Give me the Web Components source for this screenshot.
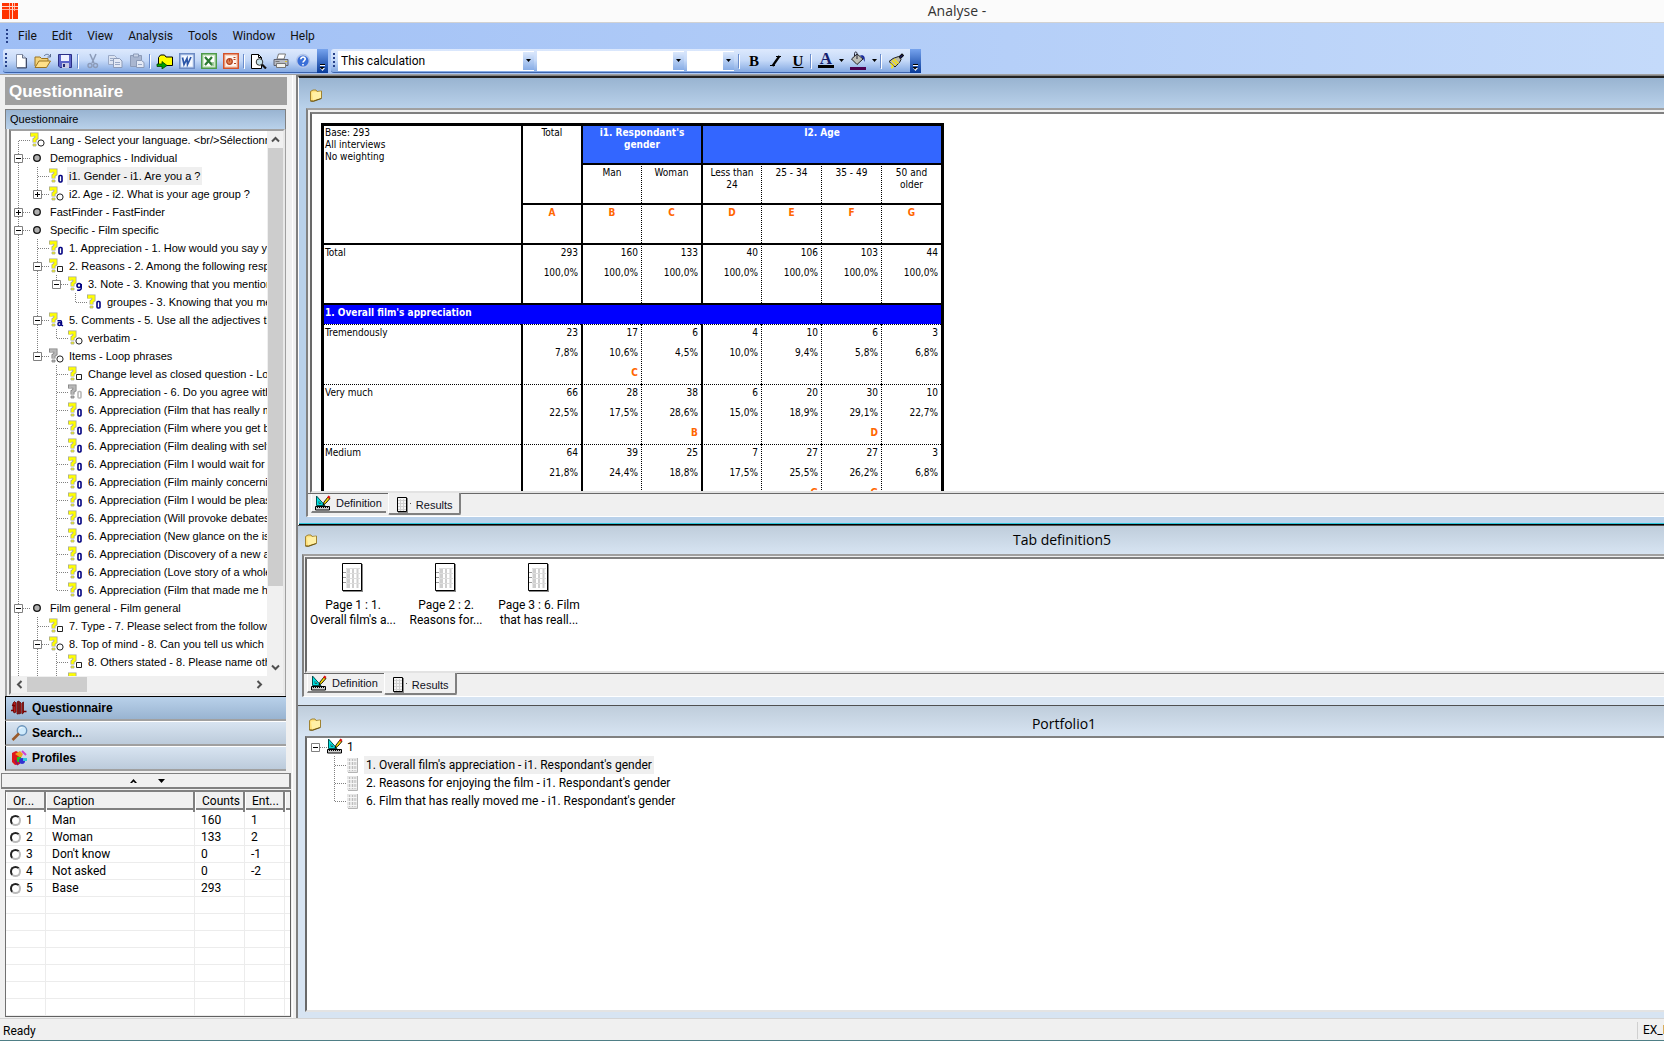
<!DOCTYPE html>
<html lang="en">
<head>
<meta charset="utf-8">
<title>Analyse</title>
<style>
html,body{margin:0;height:100%;overflow:hidden}
body{--ui:Roboto,"Noto Sans",sans-serif;--title:"Open Sans","Noto Sans",sans-serif;--sans:"Liberation Sans",Arial,sans-serif;font:12px/16px var(--ui);color:#000;background:#f0f0f0}
</style>
</head>
<body>
<analyse-app></analyse-app>
<script>
const svg=(w,h,body)=>`<svg width="${w}" height="${h}" viewBox="0 0 ${w} ${h}" aria-hidden="true" style="display:block;flex:none">${body}</svg>`;
const q=(f,s)=>`<path d="M2 4.500V2.500H6.500V6L4.500 7.500V10.500" fill="none" stroke="${s}" stroke-width="4"/><path d="M2 4.500V2.500H6.500V6L4.500 7.500V10" fill="none" stroke="${f}" stroke-width="2.400"/><path d="M3 12h3v2H3z" fill="${f}" stroke="${s}" stroke-width=".8"/>`;
const Y=q('#ffff00','#a8a890'),G=q('#b8b8b8','#808080');
const zero=c=>`<rect x="10" y="7.500" width="3" height="6.500" rx="1" fill="#fff" stroke="${c}" stroke-width="1.600"/>`;
const ring='<circle cx="11" cy="11" r="3.100" fill="#fff" stroke="#222"/>';
const sq='<path d="M8.500 8.500h5v5h-5z" fill="#fff" stroke="#222"/>';
const sheet=(x,y,w,h)=>`<path d="M${x+1} ${y+1}h${w}v${h}h-${w}z" fill="#888"/><path d="M${x}.5 ${y}.5h${w-1}v${h-1}h-${w-1}z" fill="#fff" stroke="#000"/>`;
const ICON={
logo:svg(16,16,'<path d="M0 0h16v16H0z" fill="#ff3300"/><path d="M0 3.500h16M0 6.500h16M7.500 0v16M10.500 0v16M12.500 0v8" stroke="#ffb39e" stroke-width="1"/><path d="M10.500 0v16M0 3.500h16" stroke="#ffd8cc" stroke-width="1"/>'),
new:svg(16,16,'<path d="M3.500 1.500h6l3.500 3.500v9.500H3.500z" fill="#fff" stroke="#8490a8"/><path d="M9.500 1.500V5H13" fill="#cdd8ee" stroke="#6a7488"/><path d="M13.500 5v10H4" fill="none" stroke="#3f4a66"/>'),
open:svg(18,16,'<path d="M1 13V4h5l1.500 1.500H14V8" fill="#f3d37a" stroke="#9c7420"/><path d="M1 14.500L5 8h11.500l-4 6.500z" fill="#ffe08a" stroke="#9c7420"/><path d="M10 3c2-2.500 5-2 6 .5M16.500 1v3h-3" fill="none" stroke="#5c6f92"/>'),
save:svg(16,16,'<path d="M1.500 1.500h13v13H3l-1.500-1.500z" fill="#5a63c8" stroke="#2a2f86"/><path d="M4 2h8v6H4z" fill="#eef1ff"/><path d="M5 10h7v5H5z" fill="#c8cbe4"/><path d="M6 11h2v3H6z" fill="#23286e"/>'),
cut:svg(16,16,'<path d="M5 1l4 9M11 1L7 10" stroke="#8c9bb8" stroke-width="1.500"/><circle cx="5" cy="12.500" r="2" fill="none" stroke="#8c9bb8" stroke-width="1.400"/><circle cx="10.500" cy="12.500" r="2" fill="none" stroke="#8c9bb8" stroke-width="1.400"/>'),
copy:svg(16,16,'<path d="M1.500 2.500h6l2 2v7h-8z" fill="#dce4f2" stroke="#9aa9c6"/><path d="M6.500 5.500h6l2.500 2.500v6.500H6.500z" fill="#e4eaf6" stroke="#8c9bb8"/><path d="M8 9.500h5M8 11.500h5M3 5.500h3M3 7.500h3" stroke="#9aa9c6"/>'),
paste:svg(16,16,'<path d="M1.500 2.500h11v11h-11z" fill="#a9b6d0" stroke="#8c9bb8"/><path d="M4.500 1h5v3h-5z" fill="#c9d3e6" stroke="#8c9bb8"/><path d="M7.500 7.500h5l2.500 2v5H7.500z" fill="#e4eaf6" stroke="#8c9bb8"/><path d="M9 11.500h4" stroke="#9aa9c6"/>'),
folderGo:svg(18,16,'<path d="M2.500 11V4.500L4.500 2h4l1.500 2h6.500v8.500h-8" fill="#ffff00" stroke="#000"/><path d="M1 11h5V8.500l5 4-5 3.500v-2.500H1z" fill="#00a000" stroke="#004400" stroke-width=".8"/>'),
word:svg(16,16,'<path d="M.75.75h14.500v14.500H.75z" fill="#c9d9f5" stroke="#6d8bc4" stroke-width="1.500"/><path d="M2.500 2.500h11v11h-11z" fill="#f4f8ff"/><path d="M3.500 4.500l1.500 7 3-6 .5 6 3.500-7.500" fill="none" stroke="#2b55a8" stroke-width="1.700"/>'),
excel:svg(16,16,'<path d="M.75.75h14.500v14.500H.75z" fill="#cfe8c8" stroke="#4e9a4a" stroke-width="1.500"/><path d="M3 3h10v10H3z" fill="#fff"/><path d="M4 4l7 8M11 4l-7 8" stroke="#2d7a33" stroke-width="2.200"/><path d="M10 12h3M10 10h3" stroke="#4e9a4a"/>'),
ppt:svg(16,16,'<path d="M.75.75h14.500v14.500H.75z" fill="#f8d8c4" stroke="#d4532a" stroke-width="1.500"/><path d="M3 3h10v10H3z" fill="#fff4ee"/><circle cx="6.500" cy="8.500" r="2.800" fill="#e08050" stroke="#b4401c" stroke-width="1.200"/><path d="M6.500 8.500V6M10.500 4.500h2M10.500 6.500h2M11 10.500h2" stroke="#b4401c"/>'),
preview:svg(18,16,'<path d="M1.500 1.500h7l3 3v11h-10z" fill="#fff" stroke="#000"/><path d="M8.500 1.500v3h3" fill="none" stroke="#000"/><circle cx="9.500" cy="9" r="3.300" fill="#c5e2ec" stroke="#333"/><path d="M12 11.500l4 4" stroke="#111" stroke-width="2.200"/>'),
print:svg(16,16,'<path d="M4 6l1.500-5h7L11 6z" fill="#fff" stroke="#777"/><path d="M1 6.500h14v6H1z" fill="#b9bcc4" stroke="#5e6270"/><path d="M3.500 10.500h9v4h-9z" fill="#f2f2ee" stroke="#777"/><path d="M2.500 8.500h4" stroke="#777"/><path d="M12 8.500h2" stroke="#d8c03a"/>'),
help:svg(16,16,'<circle cx="8" cy="8" r="6.400" fill="#3a6fd8" stroke="#b4c6ea" stroke-width="1.600"/><path d="M5.800 6.200c0-3 4.700-2.800 4.400 0C10 7.800 8 7.800 8 9.500M8 11v1.600" fill="none" stroke="#fff" stroke-width="1.600"/>'),
italic:svg(14,14,'<path d="M7 2.500h5M1 11.500h5" stroke="#000" stroke-width="1"/><path d="M10.500 2L3.500 12" stroke="#000" stroke-width="2.200"/>'),
bucket:svg(18,16,'<path d="M8 3l6 5-6 5.500L2.500 8z" fill="#c0c0b8" stroke="#222"/><path d="M8 8V2.500C8 .5 5.500.5 5.500 2.500V5" fill="none" stroke="#223"/><path d="M11 4.500c4-1 5.500 1 4.500 6.500-1-2-1-3.500-3-5z" fill="#1a2a9c"/>'),
brush:svg(16,16,'<path d="M10 5l4-4 1.500 1.500-4 4z" fill="#1a1a80" stroke="#111" stroke-width="1.200"/><path d="M5 5.500l5.500-2 2.500 3-1.500 3L7 14 1 8.500z" fill="#b9bba8" stroke="#222"/><path d="M4 7.500l4.500 4.500M6 6l4.500 4.500" stroke="#ffe800" stroke-width="1.100"/><path d="M2.500 10.500l3 3M3 14.500h2" stroke="#ffe800" stroke-width="1.400"/>'),
folder:svg(14,14,'<path d="M1.500 3.500L4 2h3l1 1.500 4.500-.5v7L4.500 13H1.500z" fill="#ffe07a" stroke="#a08332"/><path d="M3 4.500l9-1v6.500l-8 2z" fill="#fff0a6"/><path d="M1.500 13l3 .3 8-2.800" fill="none" stroke="#6d5510"/>'),
ruler:svg(16,16,'<path d="M1.500 1v9.500H10z" fill="#00e0e0" stroke="#005050"/><path d="M4 6.500v2h2z" fill="#fff" stroke="#005050" stroke-width=".8"/><path d="M.5 11.500h14v3.500H.5z" fill="#ccc" stroke="#000"/><path d="M2.500 11v2M4.500 11v2M6.500 11v2M8.500 11v2M10.500 11v2M12.500 11v2" stroke="#000"/><path d="M8 10l1-3 4-5 2 1.500-4.500 5z" fill="#ffe000" stroke="#000" stroke-width=".9"/><path d="M12 2.500l1.500-2L15.500 2 14 3.800z" fill="#e01010"/>'),
sheetTab:svg(19,16,sheet(1,0,10,15)+'<path d="M2 1h8v13H2z" fill="#f4f4f4"/><path d="M2 3.500h8M2 6.500h8M2 9.500h8M2 12.500h8M4.500 2v12M7.500 2v12" stroke="#d0d0d0"/><path d="M14 6h1v1h-1z" fill="#555"/>'),
page:svg(22,30,sheet(0,0,20,28)+'<path d="M5.500 5v20M7 5v20M11 5v20M15.500 5v20" stroke="#cfcfcf" stroke-width="2"/><path d="M4 5.500h14M4 10.500h14M4 15.500h14M4 20.500h14" stroke="#ddd"/><path d="M1 9.500h3M1 14.500h3M1 19.500h3" stroke="#999"/>'),
faint:svg(19,18,'<path d="M1 2h10v14H1z" fill="#e6e6e6"/><path d="M11.500 2v14.500H2" fill="none" stroke="#b4b4b4"/><path d="M3.500 3v12M6.500 3v12M9 3v12" stroke="#bdbdbd"/><path d="M1 5.500h10M1 9.500h10M1 13.500h10" stroke="#f6f6f6"/>'),
books:svg(16,16,'<path d="M2 3l1.500-1.500L5 3v9l-2 1-1-3zM6 2l1.500-1V14H6zM8.500 1.500L10 3v10l-1.500 1zM11 3l1.500-1v11L11 14z" fill="#b01c1c" stroke="#5a0808" stroke-width=".8"/><path d="M1 5l3 1M0 10.500h3M12 11.500h3.500" stroke="#700" stroke-width="1.400"/>'),
search:svg(18,16,'<circle cx="11" cy="5.500" r="4.700" fill="#cfeafc" stroke="#6a93ba" stroke-width="1.400"/><path d="M8 8.500L1.500 15" stroke="#9a5a2a" stroke-width="2.600"/><path d="M8.500 4c.5-1 1.500-1.600 2.800-1.500" stroke="#fff" fill="none"/>'),
profiles:svg(17,16,'<path d="M1 3l4-2 4 2v11l-5 1-3-3z" fill="#e01818"/><path d="M4 4l5-3 3 3-2 4z" fill="#f0a020"/><path d="M6 7h4v5H6z" fill="#20c020"/><circle cx="11" cy="11" r="3" fill="#3030d0"/><path d="M12 8h4v3h-4z" fill="#30c8d8"/><path d="M11 1l4 4" stroke="#d040d0" stroke-width="2"/><path d="M4 10l3 5" stroke="#901060" stroke-width="2"/>'),
dot:svg(19,18,'<circle cx="7" cy="9" r="3.300" fill="#b0b0b0" stroke="#111" stroke-width="1.300"/>'),
qo:svg(19,16,Y+ring),qs:svg(19,16,Y+sq),q0:svg(19,16,Y+zero('#000080')),
q9:svg(19,16,Y+'<circle cx="11" cy="9.500" r="2" fill="none" stroke="#000080" stroke-width="1.600"/><path d="M13.200 8v4.500c0 1.500-2 2-4 1.500" fill="none" stroke="#000080" stroke-width="1.500"/>'),
qa:svg(19,16,Y+'<circle cx="10.500" cy="12" r="1.600" fill="none" stroke="#000080" stroke-width="1.500"/><path d="M8.500 8.800h3c1 0 1 .7 1 1.500V13l1.500.8" fill="none" stroke="#000080" stroke-width="1.500"/>'),
go:svg(19,16,G+ring),g0:svg(19,16,G+zero('#b8b8b8')),
more:svg(11,24,'<path d="M3 16.500h5" stroke="#fff"/><path d="M3 19h5l-2.500 3z" fill="#fff"/><path d="M3 15.500h5" stroke="#000"/><path d="M2.500 18h5L5 20.500z" fill="#000"/>')
};
ICON.rulerCell=svg(19,18,ICON.ruler.replace(/^<svg[^>]*>|<\/svg>$/g,''));
const guide=(kind,exp)=>{
 const D='fill="none" stroke="#808080" stroke-dasharray="1 1"';
 let s='';
 if(kind=='v'||kind=='t')s+=`<path d="M7.500 0V18" ${D}/>`;
 if(kind=='l')s+=`<path d="M7.500 0V9" ${D}/>`;
 if(kind=='r')s+=`<path d="M7.500 10V18" ${D}/>`;
 if('tlrh'.includes(kind))s+=`<path d="M8 9.500H19" ${D}/>`;
 if(exp)s+=`<path d="M3.500 5.500h8v8h-8z" fill="#fff" stroke="#808080"/><path d="M5 9.500h5${exp=='+'?'M7.500 7v5':''}" stroke="#000"/>`;
 return svg(19,18,s);
};
const def=(name,css,html)=>customElements.define(name,class extends HTMLElement{
 connectedCallback(){
  if(this.shadowRoot)return;
  const t=document.createElement('template');
  t.innerHTML=`<style>*{box-sizing:border-box}:host{display:block;box-sizing:border-box}${css}</style>`+(typeof html=='function'?html(this):html);
  this.attachShadow({mode:'open'}).append(t.content.cloneNode(true));
 }
});

def('title-bar',':host{display:flex;align-items:center;height:23px;background:#fbfbfb;border-bottom:1px solid #d2d2d2;padding-left:2px;overflow:hidden}.t{flex:1;margin-right:-232px;text-align:center;font:14px/20px var(--title);color:#333}',
 ICON.logo+'<div class="t"><slot></slot></div>');

def('menu-bar',':host{display:flex;align-items:center;height:26px;padding-left:6px;background:linear-gradient(90deg,#9ebef5,#c4dafa)}.grip{width:2px;height:15px;background:repeating-linear-gradient(#27418a 0 2px,transparent 2px 4px)}nav{display:flex;gap:15px;margin-left:10px}a{color:#111;text-decoration:none;line-height:24px}',
 ()=>`<span class="grip"></span><nav>${['File','Edit','View','Analysis','Tools','Window','Help'].map(m=>`<a href="#">${m}</a>`).join('')}</nav>`);

def('tool-button',':host{width:22px;height:22px}:host([drop]){width:32px}button{display:flex;align-items:center;justify-content:center;gap:5px;width:100%;height:100%;border:0;padding:0;background:none;font:bold 15px/14px "Liberation Serif",serif;color:#000}.u{text-decoration:underline}.a{color:#15206e;font-size:17px;line-height:12px}.c{display:flex;flex-direction:column;align-items:center}.bar{width:16px;height:3px}',
 h=>{const n=h.getAttribute('icon'),L=h.getAttribute('letter'),bar=h.getAttribute('bar');
  const face=L?`<span class="${h.getAttribute('look')||''}">${L}</span>`:ICON[n];
  return `<button aria-label="${h.getAttribute('label')}">${bar?`<span class="c">${face}<span class="bar" style="background:${bar}"></span></span>`+svg(5,3,'<path d="M0 0h5L2.500 3z"/>'):face}</button>`;});

def('tool-strip',':host{display:flex;align-items:center;height:24px;padding-left:2px;border-radius:3px 0 0 3px;background:linear-gradient(#dde9fd,#c5d9f8 50%,#84a9e2);border-bottom:1px solid #3a62ab}.grip{width:2px;height:15px;margin-right:3px;background:repeating-linear-gradient(#27418a 0 2px,transparent 2px 4px)}.more{margin-left:3px;width:11px;height:24px;background:linear-gradient(#76a3ee,#073a99);display:flex}::slotted(hr){width:1px;height:14px;border:0;margin:0 4px 0 1px;background:#6a8ccb;box-shadow:1px 1px #fff}',
 '<span class="grip"></span><slot></slot><span class="more">'+ICON.more+'</span>');

def('combo-box',':host{position:relative;height:20px;margin-right:3px}select{appearance:none;width:100%;height:20px;border:0;border-radius:0;padding:0 14px 0 3px;background:#fff;font:12px/18px var(--ui);color:#000}.b{position:absolute;right:0;top:1px;width:11px;height:18px;background:linear-gradient(#dce9fd,#88ade6);display:flex;align-items:center;justify-content:center;pointer-events:none}',
 h=>`<select aria-label="${h.getAttribute('label')}"><option>${h.getAttribute('value')||''}</option></select><span class="b">${svg(5,3,'<path d="M0 0h5L2.500 3z"/>')}</span>`);

def('tree-row',':host{display:flex;align-items:center;height:18px;white-space:nowrap}span{padding:0 2px;margin-left:-1px;line-height:18px}:host([sel]) span{background:#efefef}',
 h=>{const g=h.getAttribute('g'),exp=/[+-]$/.test(g)?g.slice(-1):'';const cells=exp?g.slice(0,-1):g;
  return [...cells].map((c,i)=>guide(c,i==cells.length-1?exp:'')).join('')+ICON[h.getAttribute('icon')]+'<span><slot></slot></span>';});

def('stack-button',':host{height:25px;border-left:1px solid #000;border-bottom:2px solid #a0a0a0}button{display:flex;align-items:center;gap:3px;width:100%;height:23px;border:0;border-top:1px solid #fff;padding:0 0 0 5px;background:linear-gradient(#d8e4f1,#bccbdb);font:bold 12px/16px var(--sans);text-align:left}:host([on]) button{border-top-color:#000;background:linear-gradient(#b9d1ea,#99b4d1)}i{display:flex;width:18px}',
 h=>`<button><i>${ICON[h.getAttribute('icon')]}</i><slot></slot></button>`);

const TREE=[
['r','qo','Lang - Select your language. &lt;br/&gt;Sélectionn'],['t-','dot','Demographics - Individual'],['vt','q0','i1. Gender - i1. Are you a ?',1],['vl+','qo','i2. Age - i2. What is your age group ?'],['t+','dot','FastFinder - FastFinder'],['t-','dot','Specific - Film specific'],['vt','q0','1. Appreciation - 1. How would you say y'],['vt-','qs','2. Reasons - 2. Among the following resp'],['vvl-','q9','3. Note - 3. Knowing that you mention'],['vv l','q0','groupes - 3. Knowing that you me'],['vt-','qa','5. Comments - 5. Use all the adjectives th'],['vvl','qo','verbatim -'],['vl-','go','Items - Loop phrases'],['v t','qs','Change level as closed question - Lo'],['v t','g0','6. Appreciation - 6. Do you agree with'],
...['Film that has really m','Film where you get b','Film dealing with self-','Film I would wait for v','Film mainly concernin','Film I would be pleas','Will provoke debates','New glance on the is','Discovery of a new a','Love story of a whole'].map(t=>['v t','q0','6. Appreciation ('+t]),['v l','q0','6. Appreciation (Film that made me ha'],
['t-','dot','Film general - Film general'],['vt','qs','7. Type - 7. Please select from the followi'],['vt-','qo','8. Top of mind - 8. Can you tell us which a'],['vvt','qs','8. Others stated - 8. Please name oth'],['vvt','qo','']];
const chev=d=>svg(9,9,`<path d="${d}" fill="none" stroke="#505050" stroke-width="2"/>`);

def('question-tree',':host{display:grid;grid-template:minmax(0,1fr) 17px/minmax(0,1fr) 16px;border:2px solid;border-color:#a0a0a0 #e8e8e8 #e8e8e8 #808080;background:#fff;font:11px/18px var(--sans)}.rows{overflow:hidden}.v,.h{background:#f0f0f0;display:flex;align-items:center}.v{flex-direction:column}.v i{width:15px;flex:0 1 438px;background:#cdcdcd}.v b,.h b{display:flex;align-items:center;justify-content:center;width:16px;height:17px;flex:none}.v em{flex:1}.h i{width:60px;height:15px;background:#cdcdcd}.h em{flex:1}.k{background:#f0f0f0}',
 ()=>`<div class="rows">${TREE.map(([g,i,t,s])=>`<tree-row g="${g}" icon="${i}"${s?' sel':''}>${t}</tree-row>`).join('')}</div>
 <div class="v"><b>${chev('M1 6.500L4.500 3 8 6.500')}</b><i></i><em></em><b>${chev('M1 2.500L4.500 6 8 2.500')}</b></div>
 <div class="h"><b>${chev('M6.500 1L3 4.500 6.500 8')}</b><i></i><em></em><b>${chev('M2.500 1L6 4.500 2.500 8')}</b></div><div class="k"></div>`);

const ROWS=[['1','Man','160','1'],['2','Woman','133','2'],["3","Don't know",'0','-1'],['4','Not asked','0','-2'],['5','Base','293','']];
while(ROWS.length<12)ROWS.push(['','','','']);
def('answer-list',':host{border:2px solid;border-color:#808080 #606060 #606060 #707070;border-width:2px 1px 1px;background:#fff;overflow:hidden}table{width:100%;table-layout:fixed;border-spacing:0}th{height:20px;padding:0 0 3px 6px;background:linear-gradient(#f0f0f0 17px,#fff 17px);border:solid;border-color:#fff #808080 #808080 #fff;border-width:0 2px 0 1px;font-weight:400;text-align:left;line-height:14px;white-space:nowrap}th{background:linear-gradient(#f0f0f0 16px,#808080 16px,#808080 18px,#fff 18px)}td{height:17px;padding:1px 0 0 6px;border:solid #ececec;border-width:0 1px 1px 0;line-height:15px;white-space:nowrap}td:last-child{border-right:0}th:last-child{border-right:0}label{display:flex;align-items:center;gap:5px;margin-left:-2px}input{appearance:none;width:11px;height:11px;margin:0;border:2px solid;border-color:#222 #bbb #bbb #222;border-radius:50%}',
 ()=>`<table><colgroup><col style="width:40px"><col><col style="width:50px"><col style="width:40px"><col style="width:5px"></colgroup><thead><tr><th>Or...</th><th>Caption</th><th>Counts</th><th>Ent...</th><th></th></tr></thead><tbody>${ROWS.map(r=>`<tr><td>${r[0]?`<label><input type="radio" name="o">${r[0]}</label>`:''}</td><td>${r[1]}</td><td>${r[2]}</td><td>${r[3]}</td><td></td></tr>`).join('')}</tbody></table>`);

def('side-panel',':host{display:flex;flex-direction:column;width:293px;flex:none;padding:2px 1px 1px 1px;border-right:1px solid #fff}h1{margin:0 4px;height:28px;padding-left:4px;background:#a0a0a0;color:#fff;font:bold 17px/29px var(--sans)}.panel{flex:1;min-height:0;display:flex;flex-direction:column;margin:4px 5px 2px 4px}h2{margin:0;height:20px;border:1px solid #808080;border-bottom:0;padding-left:4px;background:linear-gradient(#99b4d1,#b9d1ea);font:11px/18px var(--sans)}.mid{flex:1;min-height:0;display:flex;padding:0 0 1px 2px;border-left:2px solid #a0a0a0;border-right:1px solid #a0a0a0}question-tree{flex:1;min-width:0}.split{display:flex;align-items:center;justify-content:center;gap:21px;height:16px;padding-left:4px;border:solid;border-width:1px 2px 2px 1px;border-color:#808080;margin-bottom:1px}answer-list{margin:0 0 0 4px}',
 `<h1>Questionnaire</h1><div class="panel"><h2>Questionnaire</h2><div class="mid"><question-tree></question-tree></div>
 <stack-button icon="books" on>Questionnaire</stack-button><stack-button icon="search">Search...</stack-button><stack-button icon="profiles">Profiles</stack-button></div>
 <div class="split">${svg(7,4,'<path d="M0 4L3.500 0 7 4H5L3.500 2.500 2 4z"/>')}${svg(7,4,'<path d="M0 0L3.500 4 7 0z"/>')}</div><answer-list></answer-list>`);

def('mdi-window',':host{display:flex;flex-direction:column;width:calc(100% + 162px);min-height:0;background:#d7e4f2;border-top:1px solid #505050}header{display:flex;align-items:center;flex:none;height:var(--bar,28px);padding-top:var(--drop,0px);padding-left:var(--ico,6px);background:linear-gradient(#bfcddb,#d7e4f2)}.t{flex:1;margin-left:-19px;padding-right:1px;text-align:center;font:14px/20px var(--title)}main{flex:1;min-height:0;display:flex;flex-direction:column;margin-left:var(--in,4px);border:2px solid;border-color:#a0a0a0 transparent #fff #808080;border-bottom-width:1px;background:#f0f0f0;overflow:hidden}.view{flex:1;min-height:0;margin:var(--gap,1px) 0 0 var(--gap,1px);border:2px solid;border-color:#808080 transparent #e3e3e3 #696969;background:#fff;overflow:hidden}footer{height:8px;flex:none}:host([active]){background:#b9d1ea;border-top:2px solid #222;border-left:1px solid #fff}:host([active]) header{background:linear-gradient(#99b4d1,#b9d1ea)}:host([active]) footer{border-bottom:1px solid #000;box-shadow:inset 0 -1px #2cc4d8}:host([plain]) main{border:0}:host([plain]) footer{height:6px}',
 h=>`<header>${ICON.folder}<div class="t">${h.getAttribute('caption')||''}</div></header><main><div class="view"><slot></slot></div><slot name="tabs"></slot></main><footer></footer>`);

def('tab-strip',':host{display:flex;align-items:flex-start;height:23px;flex:none;padding-left:3px;border-top:1px solid #696969;font:11px/16px var(--sans)}button{display:flex;align-items:center;border:0;padding:0 4px 0 3px;gap:5px;height:19px;background:#f0f0f0;font:inherit;color:#112;border-bottom:2px solid #808080;border-left:1px solid #fff}button+button{gap:1px;margin:-1px 0 0 2px;height:22px;padding:3px 6px 0 7px;border-right:2px solid #808080;border-radius:0 0 2px 2px}',
 `<button>${ICON.ruler}Definition</button><button>${ICON.sheetTab}Results</button>`);

const DATA=[['Total',['293','100,0%'],['160','100,0%'],['133','100,0%'],['40','100,0%'],['106','100,0%'],['103','100,0%'],['44','100,0%']],
['Tremendously',['23','7,8%'],['17','10,6%','C'],['6','4,5%'],['4','10,0%'],['10','9,4%'],['6','5,8%'],['3','6,8%']],
['Very much',['66','22,5%'],['28','17,5%'],['38','28,6%','B'],['6','15,0%'],['20','18,9%'],['30','29,1%','D'],['10','22,7%']],
['Medium',['64','21,8%'],['39','24,4%'],['25','18,8%'],['7','17,5%'],['27','25,5%','G'],['27','26,2%','G'],['3','6,8%']]];
const tr=(r,c)=>`<tr class="d ${c}"><th class="l">${r[0]}</th>${r.slice(1).map((x,i)=>`<td class="${[0,1,3].includes(i)?'s':'p'}">${x.map((v,k)=>k==2?`<b>${v}</b>`:`<span>${v}</span>`).join('')}</td>`).join('')}</tr>`;
def('cross-table',':host{padding:9px 0 0 9px}table{width:623px;table-layout:fixed;border-spacing:0;border:3px solid #000;font:10px/12px "DejaVu Sans Condensed","DejaVu Sans",sans-serif}th,td{padding:1px;vertical-align:top;font-weight:400;border:0 solid #000;overflow:hidden}.s{border-left-width:2px}.p{border-left:1px dotted #000}.y{border-top-width:2px}.l{text-align:left}.n{height:37px}.m{height:40px;padding:2px 6px}.g{background:#36f;color:#fff;font-weight:700;padding:1px 8px}.k{color:#f60;font-weight:700}.d>*{height:60px;border-top:1px dotted #000}.d.first>*{border-top:2px solid #000}.d td{text-align:right;padding:2px 3px}.d .l{padding:2px 1px}.d span,.d b{display:block;margin-bottom:8px}.d td :nth-child(3){margin-bottom:0}.d b{color:#f60}.band th{height:21px;padding:2px 1px;background:#00f;color:#fff;font-weight:700;text-align:left;border-top:2px solid #000}',
 ()=>`<table><colgroup><col>${'<col style="width:60px">'.repeat(7)}</colgroup><thead><tr><th class="l" rowspan="3">Base: 293<br>All interviews<br>No weighting</th><th class="s" rowspan="2">Total</th><th class="s g n" colspan="2">i1. Respondant's gender</th><th class="s g" colspan="4">I2. Age</th></tr>
 <tr>${['Man','Woman','Less than 24','25 - 34','35 - 49','50 and older'].map((t,i)=>`<th class="y m ${i==0||i==2?'s':'p'}">${t}</th>`).join('')}</tr>
 <tr>${[...'ABCDEFG'].map((t,i)=>`<th class="y m k ${[0,1,3].includes(i)?'s':'p'}">${t}</th>`).join('')}</tr></thead>
 <tbody>${tr(DATA[0],'first')}<tr class="band"><th colspan="8">1. Overall film's appreciation</th></tr>${DATA.slice(1).map(r=>tr(r,'')).join('')}</tbody></table>`);

def('page-thumb',':host{display:flex;flex-direction:column;align-items:center;gap:5px;width:93px;padding-right:1px;text-align:center;line-height:15px;white-space:nowrap}',ICON.page+'<div><slot></slot></div>');

def('status-bar',':host{display:flex;align-items:center;height:23px;padding:2px 0 0 3px;background:#f0f0f0;border-top:1px solid #d4d4d4;border-bottom:1px solid #4f7f86;overflow:hidden}.f{flex:1}.c{width:27px;padding-left:5px;border-left:1px solid #d0d0d0;line-height:17px;white-space:nowrap}',
 '<span class="f">Ready</span><span class="c">EX_H</span>');

def('analyse-app',':host{display:flex;flex-direction:column;height:100vh;min-width:900px}.tools{display:flex;gap:3px;height:26px;padding-left:3px;background:linear-gradient(90deg,#9ebef5,#c4dafa);border-bottom:1px solid #a0a0a0}.body{flex:1;min-height:0;display:flex}.mdi{flex:1;min-width:0;display:grid;grid-template-rows:449fr 180fr 313fr;margin-left:3px;border:solid #808080;border-width:1px 0 0 2px;overflow:hidden}.w1{--bar:30px;--drop:3px;--ico:10px;--in:7px;--gap:2px}.w3{--bar:30px;--drop:5px;--ico:10px;--in:7px;--gap:0px}.pages{display:flex;padding-top:4px}.port{padding-left:1px}combo-box{flex:none}.cb1{width:196px}.cb2{width:147px}.cb3{width:47px}',
 ()=>{const b=(i,l)=>`<tool-button icon="${i}" label="${l}"></tool-button>`;
 return `<title-bar>Analyse -</title-bar><menu-bar></menu-bar>
 <div class="tools"><tool-strip>${b('new','New')}${b('open','Open')}${b('save','Save')}<hr>${b('cut','Cut')}${b('copy','Copy')}${b('paste','Paste')}<hr>${b('folderGo','Import')}${b('word','Word')}${b('excel','Excel')}${b('ppt','PowerPoint')}<hr>${b('preview','Preview')}${b('print','Print')}${b('help','Help')}</tool-strip>
 <tool-strip><combo-box class="cb1" label="Style" value="This calculation"></combo-box><combo-box class="cb2" label="Font"></combo-box><combo-box class="cb3" label="Size"></combo-box><hr><tool-button letter="B" label="Bold"></tool-button>${b('italic','Italic')}<tool-button letter="U" look="u" label="Underline"></tool-button><hr><tool-button drop letter="A" look="a" bar="#000" label="Font color"></tool-button><tool-button drop icon="bucket" bar="#4b0050" label="Fill color"></tool-button><hr>${b('brush','Format painter')}</tool-strip></div>
 <div class="body"><side-panel></side-panel><div class="mdi">
 <mdi-window class="w1" active><cross-table></cross-table><tab-strip slot="tabs"></tab-strip></mdi-window>
 <mdi-window class="w2" caption="Tab definition5"><div class="pages"><page-thumb>Page 1 : 1.<br>Overall film's a...</page-thumb><page-thumb>Page 2 : 2.<br>Reasons for...</page-thumb><page-thumb>Page 3 : 6. Film<br>that has reall...</page-thumb></div><tab-strip slot="tabs"></tab-strip></mdi-window>
 <mdi-window class="w3" plain caption="Portfolio1"><div class="port"><tree-row g="h-" icon="rulerCell">1</tree-row><tree-row g=" t" icon="faint" sel>1. Overall film's appreciation - i1. Respondant's gender</tree-row><tree-row g=" t" icon="faint">2. Reasons for enjoying the film - i1. Respondant's gender</tree-row><tree-row g=" l" icon="faint">6. Film that has really moved me - i1. Respondant's gender</tree-row></div></mdi-window>
 </div></div><status-bar></status-bar>`;});
</script>
</body>
</html>
